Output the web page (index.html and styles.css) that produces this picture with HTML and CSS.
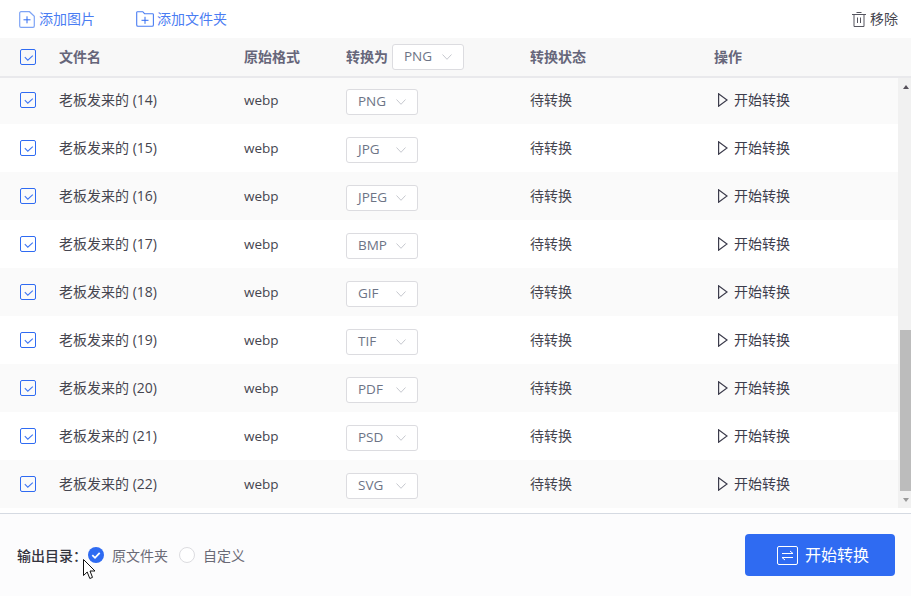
FILE: index.html
```html
<!DOCTYPE html>
<html lang="zh-CN">
<head>
<meta charset="utf-8">
<title>图片格式转换</title>
<link rel="stylesheet" href="styles.css">
</head>
<body>
<svg class="defs" width="0" height="0" aria-hidden="true">
  <symbol id="cb" viewBox="0 0 16 16"><rect x=".5" y=".5" width="15" height="15" rx="1.500" fill="none" stroke="#2f6bf2"/><path d="M4.800 8.200 7.800 11.200 12.800 6.600" fill="none" stroke="#3f77f3" stroke-width="1.100"/></symbol>
  <symbol id="chev" viewBox="0 0 10 6"><path d="M.5.500 5 5.300 9.500.500" fill="none" stroke="#c6c8cf"/></symbol>
  <symbol id="play" viewBox="0 0 10 14"><path d="M.6.800v12.400L9 7z" fill="none" stroke="#3c3c4c" stroke-width="1.200"/></symbol>
</svg>
<div class="app">
  <div class="toolbar">
    <a class="tool tool-img"><svg width="16" height="17" viewBox="0 0 16 17"><path d="M2 .7h8.500l4.800 4.600V15a1.300 1.300 0 0 1-1.300 1.300H2A1.300 1.300 0 0 1 .7 15V2A1.300 1.300 0 0 1 2 .7Z" fill="none" stroke="#7ea4f5" stroke-width="1.200"/><path d="M4.500 8.800h7M8 5.300v7" fill="none" stroke="#2f6bf2"/></svg>添加图片</a>
    <a class="tool tool-dir"><svg width="18" height="16" viewBox="0 0 18 16"><path d="M.7 14V1.600c0-.5.4-.9.9-.9h5.200l1.700 2h8c.5 0 .9.4.9.9V14c0 .7-.6 1.300-1.300 1.300H2A1.300 1.300 0 0 1 .7 14Z" fill="none" stroke="#4a7df3" stroke-width="1.100"/><path d="M5.500 9.300h7M9 5.800v7" fill="none" stroke="#2f6bf2"/></svg>添加文件夹</a>
    <a class="tool-del"><svg width="14" height="15" viewBox="0 0 14 15"><path d="M0 2.500h14M4.500 .5h5M2 2.500V14.500h10V2.500M5.500 5.500v5.500M8.500 5.500v5.500" fill="none" stroke="#55555f"/></svg>移除</a>
  </div>

  <div class="row head">
    <svg class="check"><use href="#cb"/></svg>
    <span class="txt">文件名</span>
    <span class="txt">原始格式</span>
    <span class="head-conv"><span class="txt">转换为</span><span class="select head-select"><span class="select-text">PNG</span><svg class="chev"><use href="#chev"/></svg></span></span>
    <span class="txt">转换状态</span>
    <span class="txt">操作</span>
  </div>

  <div class="body">
    <div class="list">
      <div class="row item"><svg class="check"><use href="#cb"/></svg><span class="txt">老板发来的 (14)</span><span class="fmt">webp</span><span class="select"><span class="select-text">PNG</span><svg class="chev"><use href="#chev"/></svg></span><span class="txt">待转换</span><span class="action"><svg class="play"><use href="#play"/></svg><span class="txt">开始转换</span></span></div>
      <div class="row item"><svg class="check"><use href="#cb"/></svg><span class="txt">老板发来的 (15)</span><span class="fmt">webp</span><span class="select"><span class="select-text">JPG</span><svg class="chev"><use href="#chev"/></svg></span><span class="txt">待转换</span><span class="action"><svg class="play"><use href="#play"/></svg><span class="txt">开始转换</span></span></div>
      <div class="row item"><svg class="check"><use href="#cb"/></svg><span class="txt">老板发来的 (16)</span><span class="fmt">webp</span><span class="select"><span class="select-text">JPEG</span><svg class="chev"><use href="#chev"/></svg></span><span class="txt">待转换</span><span class="action"><svg class="play"><use href="#play"/></svg><span class="txt">开始转换</span></span></div>
      <div class="row item"><svg class="check"><use href="#cb"/></svg><span class="txt">老板发来的 (17)</span><span class="fmt">webp</span><span class="select"><span class="select-text">BMP</span><svg class="chev"><use href="#chev"/></svg></span><span class="txt">待转换</span><span class="action"><svg class="play"><use href="#play"/></svg><span class="txt">开始转换</span></span></div>
      <div class="row item"><svg class="check"><use href="#cb"/></svg><span class="txt">老板发来的 (18)</span><span class="fmt">webp</span><span class="select"><span class="select-text">GIF</span><svg class="chev"><use href="#chev"/></svg></span><span class="txt">待转换</span><span class="action"><svg class="play"><use href="#play"/></svg><span class="txt">开始转换</span></span></div>
      <div class="row item"><svg class="check"><use href="#cb"/></svg><span class="txt">老板发来的 (19)</span><span class="fmt">webp</span><span class="select"><span class="select-text">TIF</span><svg class="chev"><use href="#chev"/></svg></span><span class="txt">待转换</span><span class="action"><svg class="play"><use href="#play"/></svg><span class="txt">开始转换</span></span></div>
      <div class="row item"><svg class="check"><use href="#cb"/></svg><span class="txt">老板发来的 (20)</span><span class="fmt">webp</span><span class="select"><span class="select-text">PDF</span><svg class="chev"><use href="#chev"/></svg></span><span class="txt">待转换</span><span class="action"><svg class="play"><use href="#play"/></svg><span class="txt">开始转换</span></span></div>
      <div class="row item"><svg class="check"><use href="#cb"/></svg><span class="txt">老板发来的 (21)</span><span class="fmt">webp</span><span class="select"><span class="select-text">PSD</span><svg class="chev"><use href="#chev"/></svg></span><span class="txt">待转换</span><span class="action"><svg class="play"><use href="#play"/></svg><span class="txt">开始转换</span></span></div>
      <div class="row item"><svg class="check"><use href="#cb"/></svg><span class="txt">老板发来的 (22)</span><span class="fmt">webp</span><span class="select"><span class="select-text">SVG</span><svg class="chev"><use href="#chev"/></svg></span><span class="txt">待转换</span><span class="action"><svg class="play"><use href="#play"/></svg><span class="txt">开始转换</span></span></div>
    </div>
    <div class="scrollbar">
      <span class="arrow arrow-up"></span>
      <div class="track"><div class="thumb"></div></div>
      <span class="arrow arrow-down"></span>
    </div>
  </div>

  <div class="footer">
    <span class="out-label">输出目录：</span>
    <span class="radio radio-on"><svg width="16" height="16" viewBox="0 0 16 16"><circle cx="8" cy="8" r="8" fill="#2f6bf2"/><path d="M4.300 8.200 7 10.800l4.700-4.900" fill="none" stroke="#fff" stroke-width="1.800"/></svg></span>
    <span class="radio-text">原文件夹</span>
    <span class="radio radio-off"></span>
    <span class="radio-text">自定义</span>
    <button class="start"><svg width="21" height="19" viewBox="0 0 21 19"><rect x=".5" y=".5" width="20" height="18" rx="1.500" fill="none" stroke="#fff"/><path d="M5 7.500h11L13 5M16 11.500H5L8 14" fill="none" stroke="#fff"/></svg><span class="start-text">开始转换</span></button>
    <svg class="cursor" width="13" height="21" viewBox="0 0 13 21"><path d="M.5.500v16l3.700-3.500 2.600 6.500 2.700-1.100L7 12h5z" fill="#fff" stroke="#111"/></svg>
  </div>
</div>
</body>
</html>
```

FILE: styles.css
```css
* { box-sizing: border-box; }
html, body { margin: 0; padding: 0; }
body {
  width: 911px;
  height: 596px;
  overflow: hidden;
  background: #fff;
  font-family: "Open Sans", "Noto Sans CJK SC", sans-serif;
  font-size: 14px;
  color: #45454f;
}
.defs { position: absolute; }
.app { display: flex; flex-direction: column; height: 596px; position: relative; }

.txt, .fmt, .select-text, .start-text, .radio-text, .out-label, .tool, .tool-del { line-height: 20px; }
.fmt { font-size: 13.5px; }
.select-text { padding-bottom: 3px; }
.radio-text, .out-label { padding-top: 2px; }

.toolbar { height: 38px; display: flex; align-items: center; padding: 0 13px 0 19px; background: #fff; }
.tool { display: flex; align-items: center; gap: 4px; color: #4a7df3; }
.tool svg, .tool-del svg { flex: none; }
.tool-img { width: 117px; }
.tool-dir { gap: 3px; }
.tool-del { margin-left: auto; display: flex; align-items: center; gap: 4px; color: #45454f; }

.row {
  display: grid;
  grid-template-columns: 39px 185px 102px 184px 184px 1fr;
  align-items: center;
  padding-left: 20px;
}
.head {
  height: 40px;
  background: #f8f8f8;
  border-bottom: 2px solid #e9e9ec;
  font-weight: 700;
  color: #66667a;
  position: relative;
}
.head-conv { display: flex; align-items: center; gap: 4px; }
.check { width: 16px; height: 16px; display: block; }

.body { display: flex; height: 430px; margin-bottom: 5px; }
.list { width: 898px; flex: none; margin-top: -2px; }
.item { height: 48px; }
.item:nth-child(odd) { background: #fafafa; }
.item .select { margin-top: 4px; }

.select {
  width: 72px;
  height: 26px;
  display: flex;
  align-items: center;
  padding-left: 11px;
  background: #fff;
  border: 1px solid #dcdce0;
  border-radius: 3px;
  color: #6d7486;
  font-weight: 400;
  font-size: 13.5px;
  position: relative;
}
.chev { width: 10px; height: 6px; position: absolute; left: 49px; top: 9px; }
.action { display: flex; align-items: center; gap: 6px; color: #3c3c4c; }
.play { width: 10px; height: 14px; margin-left: 4px; }

.scrollbar { width: 13px; padding-left: 2px; background: #f1f1f1; display: flex; flex-direction: column; }
.track { flex: 1; width: 100%; display: flex; flex-direction: column; justify-content: flex-end; }
.thumb { height: 161px; width: 100%; background: #bcbcbc; margin-bottom: 4px; }
.arrow { width: 0; height: 0; margin-left: 3px; border-left: 3.500px solid transparent; border-right: 3.500px solid transparent; flex: none; }
.arrow-up { border-bottom: 4px solid #55505a; margin-top: 7px; margin-bottom: 2px; }
.arrow-down { border-top: 4px solid #9a9a9a; margin-top: 3px; margin-bottom: 6px; }

.footer {
  flex: 1;
  display: flex;
  align-items: center;
  padding: 0 16px 0 17px;
  background: #fcfcfd;
  border-top: 1px solid #d5dae2;
  position: relative;
}
.out-label { color: #33333d; font-weight: 500; width: 71px; flex: none; }
.radio { width: 16px; height: 16px; flex: none; display: block; }
.radio svg { display: block; }
.radio-off { border-radius: 50%; border: 1px solid #dcdce0; background: #fff; margin-left: 11px; }
.radio-text { margin-left: 8px; color: #6a6a76; }
.start {
  margin-left: auto;
  width: 150px;
  height: 42px;
  display: flex;
  align-items: center;
  justify-content: center;
  gap: 7px;
  padding: 0 0 0 6px;
  border: 0;
  border-radius: 4px;
  background: #2f6bf2;
  color: #fff;
  font-family: inherit;
  font-size: 16px;
}
.cursor { position: absolute; left: 83px; top: 45px; }
```
